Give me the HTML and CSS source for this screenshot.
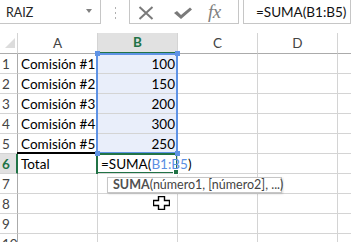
FILE: index.html
```html
<!DOCTYPE html>
<html lang="es">
<head>
<meta charset="utf-8">
<link rel="stylesheet" href="styles.css">
</head>
<body>
<div class="toolbar">
  <div class="namebox"><span class="nb-text">RAIZ</span><span class="caret"></span></div>
  <div class="grip"><i></i><i></i><i></i></div>
  <div class="fbtns">
    <svg class="ic-x" width="16" height="14" viewBox="0 0 16 14"><path d="M1.5 1 L14.5 13 M14.5 1 L1.5 13" stroke="#7a7a7a" stroke-width="2" fill="none"/></svg>
    <svg class="ic-check" width="20" height="12" viewBox="0 0 20 12"><path d="M1 6 L4 4 L8 8 L17 0.5 L19 2.5 L8 12 Z" fill="#7a7a7a"/></svg>
    <span class="fx">fx</span>
  </div>
  <div class="fbar">=SUMA(B1:B5)</div>
</div>
<div class="sheet">
  <div class="grid">
    <div class="corner"><span class="tri"></span></div>
    <div class="ch">A</div><div class="ch sel">B</div><div class="ch">C</div><div class="ch">D</div><div class="ch last"></div>

    <div class="rh">1</div><div class="c">Comisión #1</div><div class="c num rng">100</div><div class="c"></div><div class="c"></div><div class="c last"></div>
    <div class="rh">2</div><div class="c">Comisión #2</div><div class="c num rng">150</div><div class="c"></div><div class="c"></div><div class="c last"></div>
    <div class="rh">3</div><div class="c">Comisión #3</div><div class="c num rng">200</div><div class="c"></div><div class="c"></div><div class="c last"></div>
    <div class="rh">4</div><div class="c">Comisión #4</div><div class="c num rng">300</div><div class="c"></div><div class="c"></div><div class="c last"></div>
    <div class="rh">5</div><div class="c">Comisión #5</div><div class="c num rng">250</div><div class="c"></div><div class="c"></div><div class="c last"></div>
    <div class="rh sel">6</div><div class="c">Total</div><div class="c edit">=SUMA(<span class="ref">B1:B5</span>)</div><div class="c"></div><div class="c"></div><div class="c last"></div>
    <div class="rh">7</div><div class="c"></div><div class="c"></div><div class="c"></div><div class="c"></div><div class="c last"></div>
    <div class="rh">8</div><div class="c"></div><div class="c"></div><div class="c"></div><div class="c"></div><div class="c last"></div>
    <div class="rh">9</div><div class="c"></div><div class="c"></div><div class="c"></div><div class="c"></div><div class="c last"></div>
    <div class="rh">10</div><div class="c"></div><div class="c"></div><div class="c"></div><div class="c"></div><div class="c last"></div>
  </div>

  <div class="range"></div>
  <span class="hd h1"></span><span class="hd h2"></span><span class="hd h3"></span><span class="hd h4"></span>
  <div class="topline"></div>
  <div class="active"></div>
  <span class="fill-handle"></span>
  <div class="tip"><b>SUMA</b>(número1, [número2], ...)</div>
  <svg class="cursor" width="17" height="14" viewBox="0 0 17 14"><path d="M5.5 0.5 H11.5 V4.5 H16.5 V9.5 H11.5 V13.5 H5.5 V9.5 H0.5 V4.5 H5.5 Z" fill="#fff" stroke="#000" stroke-width="1.4"/></svg>
</div>
</body>
</html>
```

FILE: styles.css
```css
* { box-sizing: border-box; }
html, body { margin: 0; padding: 0; background: #fff; overflow: hidden; }
body {
  width: 351px; height: 242px;
  font-family: Lato, "Liberation Sans", sans-serif;
  color: #000;
  position: relative;
}

.toolbar {
  display: flex;
  height: 25px;
  margin-top: -1px;
}
.namebox {
  width: 102px;
  margin-left: -1px;
  border: 1px solid #c6c6c6;
  display: flex;
  align-items: center;
  justify-content: space-between;
  padding: 0 8px 0 6px;
}
.nb-text { font-size: 12.5px; color: #262626; margin-top: 2px; }
.caret {
  width: 0; height: 0;
  border-left: 3.5px solid transparent;
  border-right: 3.5px solid transparent;
  border-top: 4px solid #808080;
  margin-top: -1px;
}
.grip {
  width: 28px;
  display: flex;
  flex-direction: column;
  align-items: center;
  justify-content: center;
  gap: 3px;
  padding-top: 2px;
}
.grip i { display: block; width: 1px; height: 2px; background: #b0b0b0; }
.fbtns {
  width: 110px;
  border: 1px solid #c6c6c6;
  display: flex;
  align-items: center;
  padding-left: 8px;
}
.ic-x { margin-top: 2px; }
.ic-check { margin-left: 19px; margin-top: 3px; }
.fx {
  margin-left: 15px;
  font-family: "Liberation Serif", serif;
  font-style: italic;
  font-size: 19px;
  color: #808080;
  letter-spacing: -0.5px;
}
.fbar {
  width: 108px;
  margin-left: 4px;
  border: 1px solid #c6c6c6;
  font-size: 13.5px;
  padding-left: 12px;
  padding-top: 4px;
  color: #111;
  white-space: nowrap;
}

.sheet {
  position: relative;
  margin-top: 9px;
}
.grid {
  display: grid;
  grid-template-columns: 18px 80px 80px 80px 80px 1fr;
  grid-template-rows: 21px repeat(10, 20px);
}
.corner {
  border-right: 1px solid #d4d4d4;
  border-bottom: 1px solid #ababab;
  position: relative;
}
.tri {
  position: absolute;
  left: 5px; top: 5px;
  width: 0; height: 0;
  border-left: 10px solid transparent;
  border-bottom: 10px solid #dcdcdc;
}
.ch {
  border-right: 1px solid #d4d4d4;
  border-bottom: 1px solid #ababab;
  text-align: center;
  font-size: 13.5px;
  line-height: 20px;
  color: #444;
}
.ch.sel {
  background: #e1e1e1;
  color: #217346;
  font-weight: bold;
  border-bottom: 2px solid #217346;
  line-height: 19px;
}
.ch.last, .c.last { border-right: none; }
.rh {
  border-right: 1px solid #ababab;
  border-bottom: 1px solid #d4d4d4;
  font-size: 13.5px;
  line-height: 20px;
  padding-left: 2px;
  color: #444;
  overflow: hidden;
}
.rh.sel {
  background: #e1e1e1;
  color: #217346;
  font-weight: bold;
  border-right: 2px solid #217346;
}
.c {
  border-right: 1px solid #d4d4d4;
  border-bottom: 1px solid #d4d4d4;
  font-size: 13.5px;
  line-height: 20px;
  padding-left: 3px;
  white-space: nowrap;
  color: #000;
}
.c.num { text-align: right; padding-right: 2px; }
.c.rng { background: #e9eefa; }
.c.edit { padding-left: 3px; position: relative; z-index: 2; }
.ref { color: #5b8fe3; }

.range {
  position: absolute;
  left: 96px; top: 20px;
  width: 82px; height: 101px;
  border: 2px solid #5f93e5;
}
.hd {
  position: absolute;
  width: 5px; height: 5px;
  background: #5f93e5;
  z-index: 3;
}
.h1 { left: 95px; top: 18px; }
.h2 { left: 175px; top: 18px; }
.h3 { left: 95px; top: 118px; }
.h4 { left: 175px; top: 118px; }
.topline {
  position: absolute;
  left: 17px; top: 119px;
  width: 79px; height: 2px;
  background: #000;
}
.active {
  position: absolute;
  left: 96px; top: 120px;
  width: 82px; height: 21px;
  border: 2px solid #217346;
}
.fill-handle {
  position: absolute;
  left: 173px; top: 136px;
  width: 6px; height: 6px;
  background: #217346;
  border: 1px solid #fff;
  z-index: 3;
}
.tip {
  position: absolute;
  left: 107px; top: 144px;
  width: 175px; height: 16px;
  border: 1px solid #c6c6c6;
  background: #fff;
  box-shadow: 1px 1px 2px rgba(0,0,0,0.15);
  font-size: 12.5px;
  line-height: 14px;
  padding-left: 5px;
  color: #444;
  white-space: nowrap;
  z-index: 4;
}
.tip b { color: #505050; }
.cursor {
  position: absolute;
  left: 153px; top: 163px;
  z-index: 5;
}
```
